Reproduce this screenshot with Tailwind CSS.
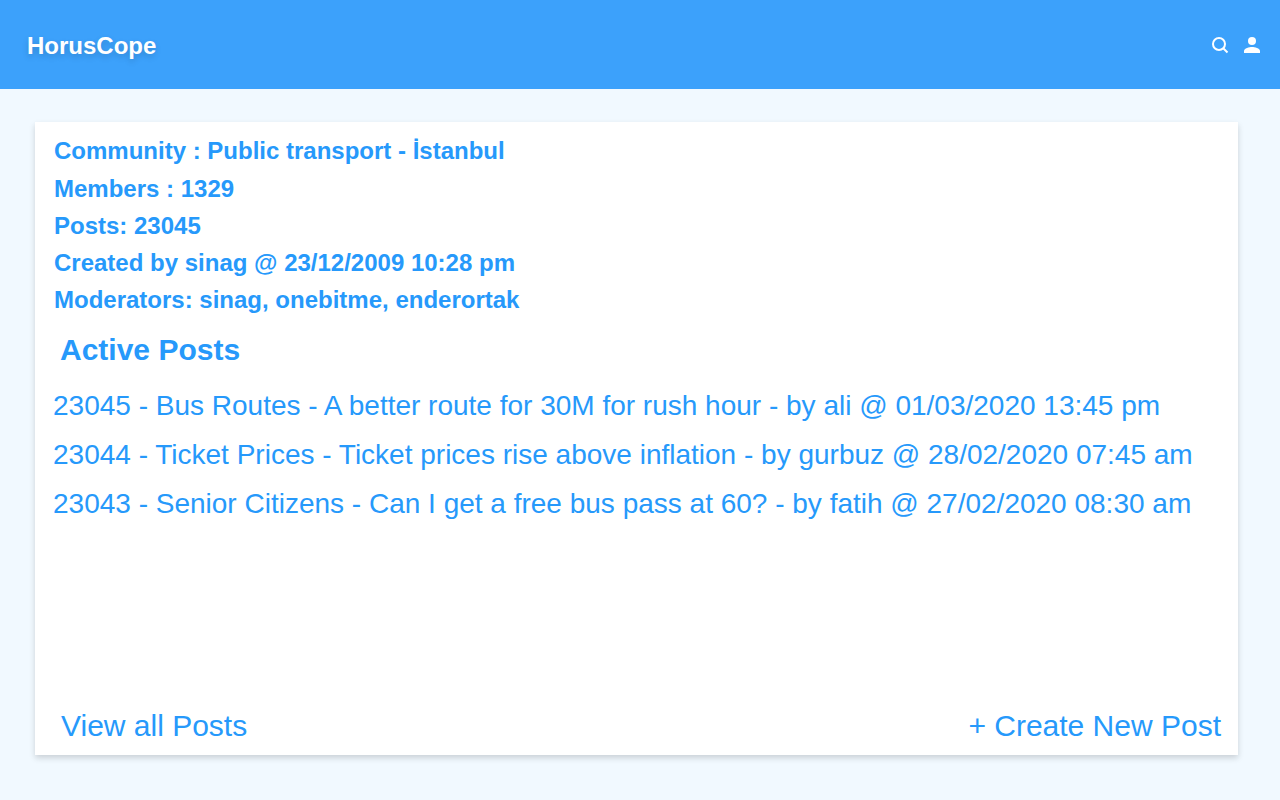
<!DOCTYPE html>
<html lang="en">
<head>
<meta charset="utf-8">
<title>HorusCope</title>
<script src="https://cdn.jsdelivr.net/npm/@tailwindcss/browser@4"></script>
</head>
<body class="flex h-screen flex-col overflow-hidden bg-[#f1f9ff] font-['Liberation_Sans',Arial,sans-serif] text-[#2699fb]">
  <header class="flex h-[89px] shrink-0 items-center justify-between bg-[#3ca1fb] pr-4 pl-[27px] text-white">
    <h1 class="mt-[3px] text-2xl font-bold whitespace-nowrap [text-shadow:0_3px_6px_rgba(0,0,0,0.16)]">HorusCope</h1>
    <div class="mt-px flex items-center gap-2">
      <svg class="size-6" viewBox="0 0 24 24" fill="none" stroke="currentColor" stroke-width="2"><circle cx="11" cy="11" r="6"/><path d="M15 15l4.500 4.500"/></svg>
      <svg class="size-6" viewBox="0 0 24 24" fill="currentColor"><circle cx="12" cy="8" r="4"/><path d="M4 20v-2c0-2.700 5.300-4 8-4s8 1.300 8 4v2z"/></svg>
    </div>
  </header>
  <main class="mt-[33px] mr-[42px] ml-[35px] flex h-[633px] flex-col bg-white whitespace-nowrap shadow-[0_3px_6px_rgba(0,0,0,0.16)]">
    <div class="mt-[10px] ml-[19px] text-2xl leading-[37px] font-bold">
      <p class="mb-px">Community : Public transport - İstanbul</p>
      <p>Members : 1329</p>
      <p>Posts: 23045</p>
      <p>Created by sinag @ 23/12/2009 10:28 pm</p>
      <p>Moderators: sinag, onebitme, enderortak</p>
    </div>
    <h2 class="mt-[14px] ml-[25px] text-[30px] leading-[36px] font-bold">Active Posts</h2>
    <ul class="mt-[13px] ml-[18px] text-[28px] leading-[49px]">
      <li>23045 - Bus Routes - A better route for 30M for rush hour - by ali @ 01/03/2020 13:45 pm</li>
      <li>23044 - Ticket Prices - Ticket prices rise above inflation - by gurbuz @ 28/02/2020 07:45 am</li>
      <li>23043 - Senior Citizens - Can I get a free bus pass at 60? - by fatih @ 27/02/2020 08:30 am</li>
    </ul>
    <div class="mt-auto mr-[17px] mb-[11px] ml-[26px] flex justify-between text-[30px] leading-[36px]">
      <a>View all Posts</a>
      <a>+ Create New Post</a>
    </div>
  </main>
</body>
</html>
